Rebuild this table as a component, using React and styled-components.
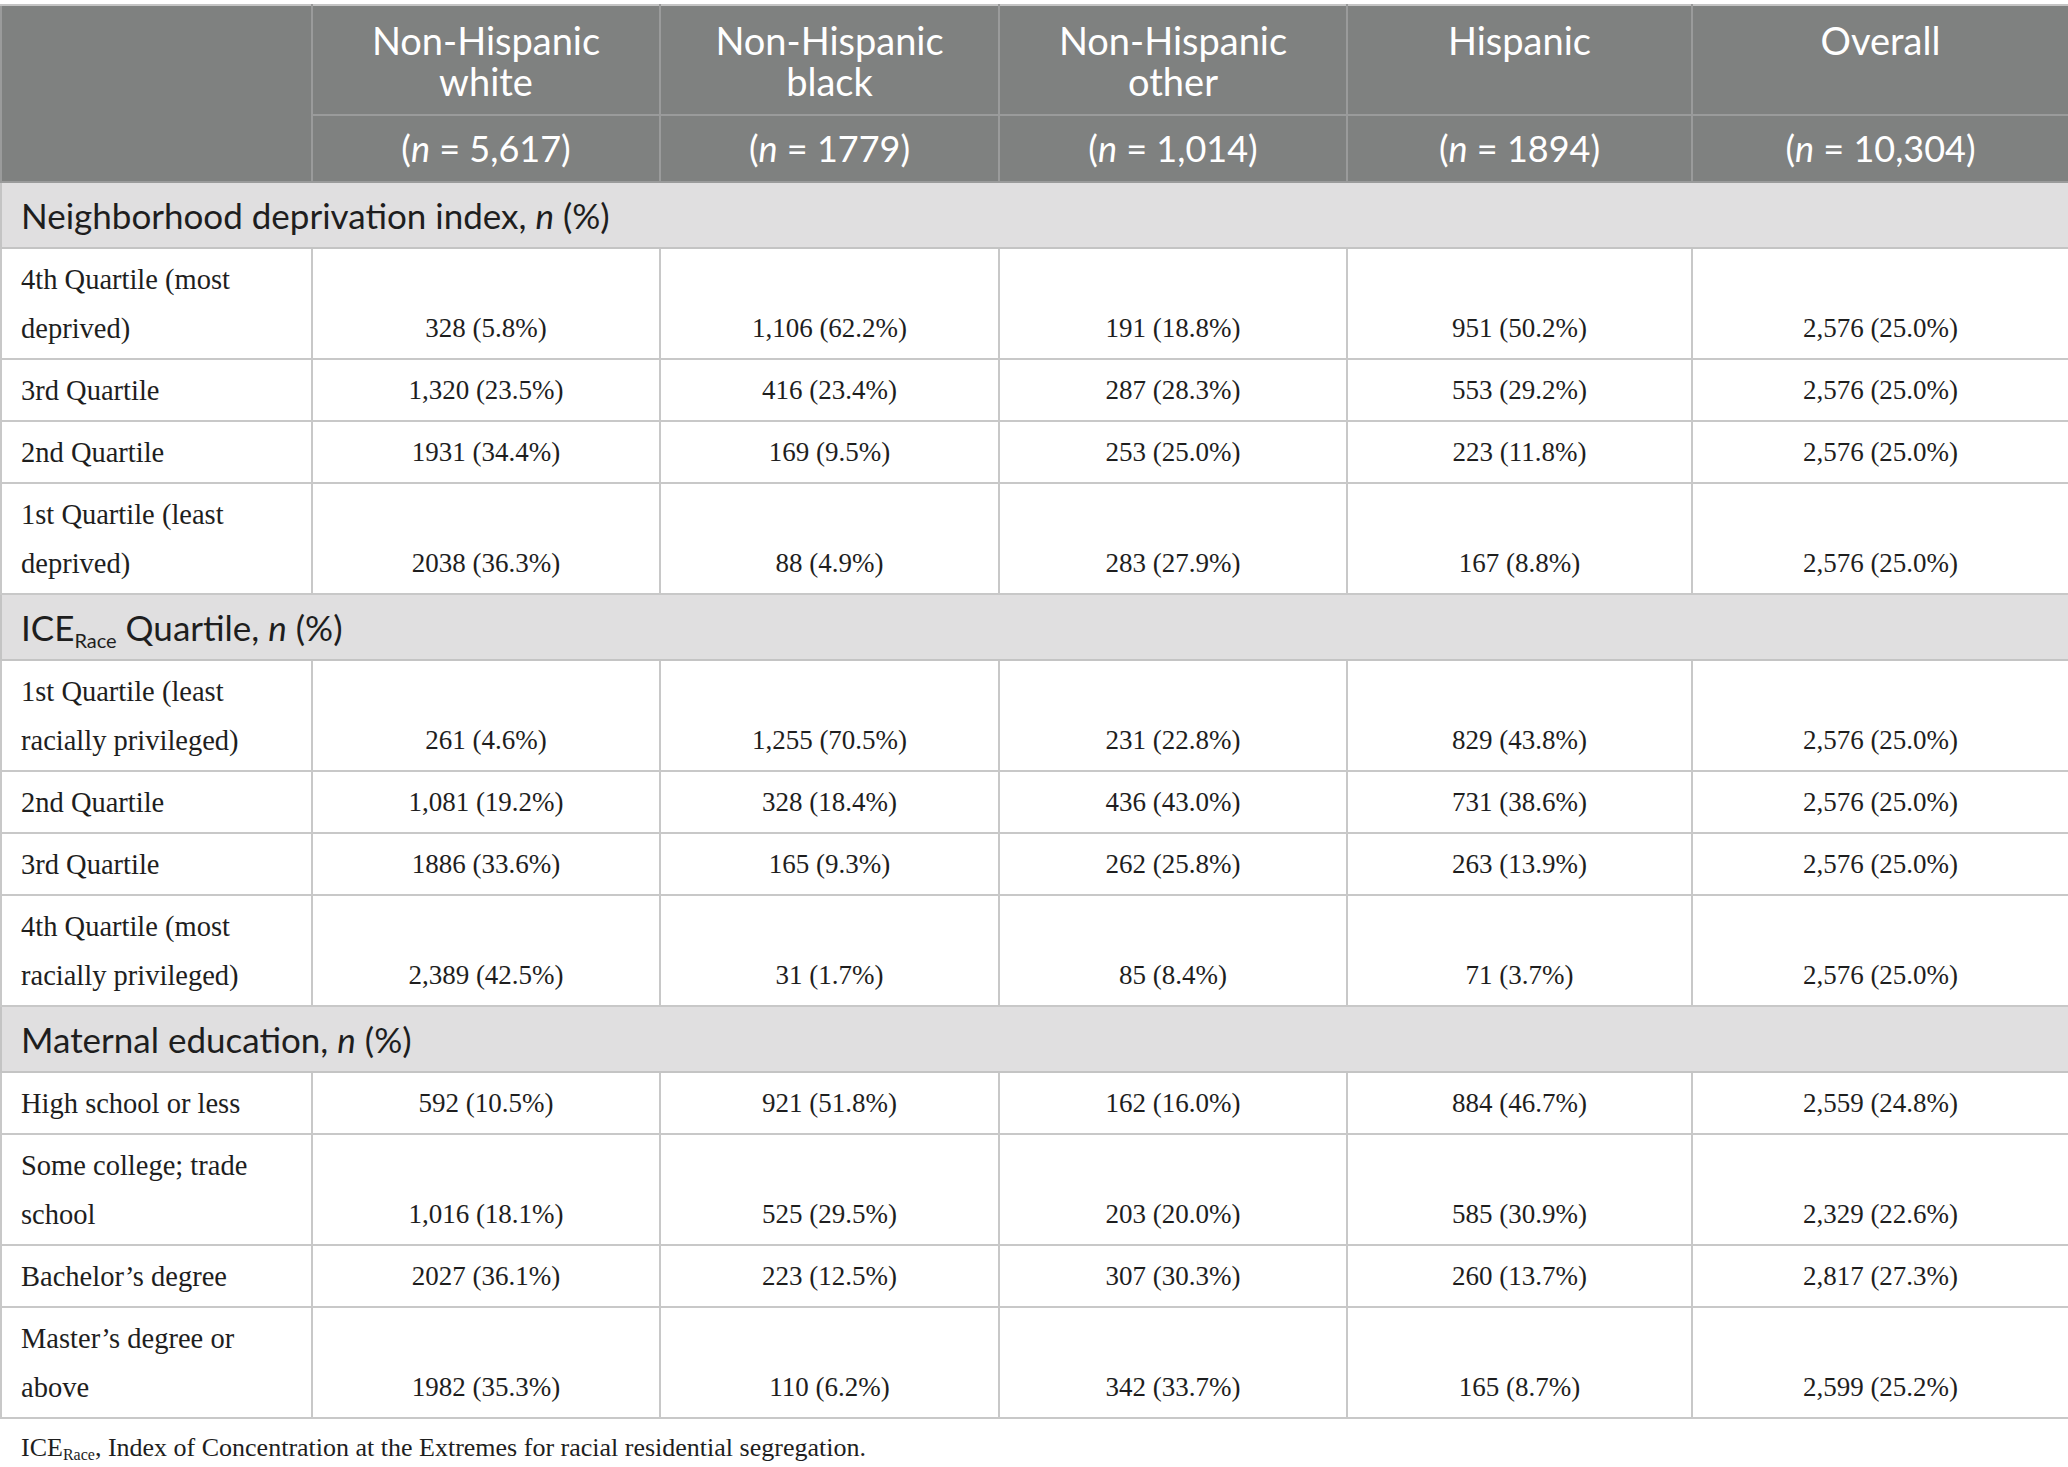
import React from "react";
import styled, { createGlobalStyle } from "styled-components";

const GlobalStyle = createGlobalStyle`
  html, body {
    margin: 0;
    padding: 0;
    background: #ffffff;
  }
`;

const Page = styled.div`
  width: 2068px;
  padding-top: 4px;
  box-sizing: border-box;
`;

const Table = styled.table`
  width: 2068px;
  table-layout: fixed;
  border-collapse: collapse;
  border: 2px solid #c4c4c4;
`;

const HeadCell = styled.th`
  background: #7f8180;
  color: #ffffff;
  font-family: Lato, "Open Sans", sans-serif;
  font-weight: 400;
  font-size: ${({ $top }) => ($top ? "38px" : "36px")};
  line-height: 41px;
  text-align: center;
  vertical-align: ${({ $top }) => ($top ? "top" : "middle")};
  padding: ${({ $top }) => ($top ? "14px 10px 12px" : "12px 10px")};
  height: ${({ $top }) => ($top ? "82px" : "41px")};
  border: 2px solid #9a9b9b;
  border-top-color: #c4c4c4;

  i {
    font-style: italic;
  }
`;

const HeadLine = styled.div`
  height: 41px;
  overflow: visible;
`;

const SectionCell = styled.td`
  background: #e0dfe0;
  color: #1e1e1e;
  font-family: Lato, "Open Sans", sans-serif;
  font-size: 35px;
  line-height: 40px;
  padding: 12px 19px 12px;
  border: 2px solid #c4c4c4;
  text-align: left;
`;

const SubText = styled.sub`
  font-size: 20px;
  vertical-align: -7px;
  line-height: 0;
`;

const BodyCell = styled.td`
  font-family: "Liberation Serif", "Times New Roman", serif;
  line-height: 49px;
  color: #1e1e1e;
  padding: 6px 19px 5px;
  border: 2px solid #c8c8c8;
  vertical-align: bottom;
`;

const LabelCell = styled(BodyCell)`
  font-size: 28.5px;
  text-align: left;
  padding-right: 40px;
`;

const ValueCell = styled(BodyCell)`
  font-size: 27px;
  text-align: center;
`;

const Footnote = styled.p`
  margin: 14px 0 0;
  padding-left: 21px;
  font-family: "Liberation Serif", "Times New Roman", serif;
  font-size: 26px;
  line-height: 30px;
  color: #1e1e1e;
`;

const FootSub = styled.sub`
  font-size: 16px;
  vertical-align: -4px;
  line-height: 0;
`;

const columns = [
  { label: ["Non-Hispanic", "white"], n: "5,617", width: 348 },
  { label: ["Non-Hispanic", "black"], n: "1779", width: 339 },
  { label: ["Non-Hispanic", "other"], n: "1,014", width: 348 },
  { label: ["Hispanic"], n: "1894", width: 345 },
  { label: ["Overall"], n: "10,304", width: 377 },
];

const sections = [
  {
    title: (
      <>
        Neighborhood deprivation index, <i>n</i> (%)
      </>
    ),
    rows: [
      ["4th Quartile (most deprived)", "328 (5.8%)", "1,106 (62.2%)", "191 (18.8%)", "951 (50.2%)", "2,576 (25.0%)"],
      ["3rd Quartile", "1,320 (23.5%)", "416 (23.4%)", "287 (28.3%)", "553 (29.2%)", "2,576 (25.0%)"],
      ["2nd Quartile", "1931 (34.4%)", "169 (9.5%)", "253 (25.0%)", "223 (11.8%)", "2,576 (25.0%)"],
      ["1st Quartile (least deprived)", "2038 (36.3%)", "88 (4.9%)", "283 (27.9%)", "167 (8.8%)", "2,576 (25.0%)"],
    ],
  },
  {
    title: (
      <>
        ICE<SubText>Race</SubText> Quartile, <i>n</i> (%)
      </>
    ),
    rows: [
      ["1st Quartile (least racially privileged)", "261 (4.6%)", "1,255 (70.5%)", "231 (22.8%)", "829 (43.8%)", "2,576 (25.0%)"],
      ["2nd Quartile", "1,081 (19.2%)", "328 (18.4%)", "436 (43.0%)", "731 (38.6%)", "2,576 (25.0%)"],
      ["3rd Quartile", "1886 (33.6%)", "165 (9.3%)", "262 (25.8%)", "263 (13.9%)", "2,576 (25.0%)"],
      ["4th Quartile (most racially privileged)", "2,389 (42.5%)", "31 (1.7%)", "85 (8.4%)", "71 (3.7%)", "2,576 (25.0%)"],
    ],
  },
  {
    title: (
      <>
        Maternal education, <i>n</i> (%)
      </>
    ),
    rows: [
      ["High school or less", "592 (10.5%)", "921 (51.8%)", "162 (16.0%)", "884 (46.7%)", "2,559 (24.8%)"],
      ["Some college; trade school", "1,016 (18.1%)", "525 (29.5%)", "203 (20.0%)", "585 (30.9%)", "2,329 (22.6%)"],
      ["Bachelor\u2019s degree", "2027 (36.1%)", "223 (12.5%)", "307 (30.3%)", "260 (13.7%)", "2,817 (27.3%)"],
      ["Master\u2019s degree or above", "1982 (35.3%)", "110 (6.2%)", "342 (33.7%)", "165 (8.7%)", "2,599 (25.2%)"],
    ],
  },
];

export default function App() {
  return (
    <Page>
      <GlobalStyle />
      <Table>
        <colgroup>
          <col style={{ width: 311 }} />
          {columns.map((c, i) => (
            <col key={i} style={{ width: c.width }} />
          ))}
        </colgroup>
        <thead>
          <tr>
            <HeadCell rowSpan={2} />
            {columns.map((c, i) => (
              <HeadCell key={i} $top>
                {c.label.map((l, j) => (
                  <HeadLine key={j}>{l}</HeadLine>
                ))}
              </HeadCell>
            ))}
          </tr>
          <tr>
            {columns.map((c, i) => (
              <HeadCell key={i}>
                (<i>n</i> = {c.n})
              </HeadCell>
            ))}
          </tr>
        </thead>
        <tbody>
          {sections.map((s, si) => (
            <React.Fragment key={si}>
              <tr>
                <SectionCell colSpan={6}>{s.title}</SectionCell>
              </tr>
              {s.rows.map((r, ri) => (
                <tr key={ri}>
                  <LabelCell>{r[0]}</LabelCell>
                  {r.slice(1).map((v, vi) => (
                    <ValueCell key={vi}>{v}</ValueCell>
                  ))}
                </tr>
              ))}
            </React.Fragment>
          ))}
        </tbody>
      </Table>
      <Footnote>
        ICE<FootSub>Race</FootSub>, Index of Concentration at the Extremes for racial residential segregation.
      </Footnote>
    </Page>
  );
}
